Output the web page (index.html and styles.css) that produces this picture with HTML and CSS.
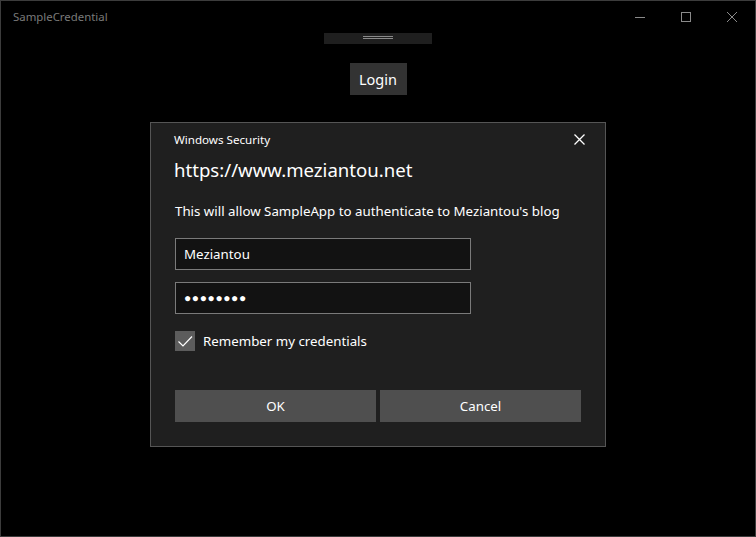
FILE: index.html
```html
<!DOCTYPE html>
<html>
<head>
  <title>SampleCredential</title>
  <link rel="stylesheet" href="styles.css">
</head>
<body>
  <div class="window">
    <div class="titlebar">
      <span class="app-title">SampleCredential</span>
      <div class="caption">
        <span class="cap-btn">
          <svg width="10" height="10" viewBox="0 0 10 10"><path d="M0 5.5h10" stroke="#8a8a8a" stroke-width="1"/></svg>
        </span>
        <span class="cap-btn">
          <svg width="10" height="10" viewBox="0 0 10 10"><rect x="0.5" y="0.5" width="9" height="9" fill="none" stroke="#8a8a8a" stroke-width="1"/></svg>
        </span>
        <span class="cap-btn">
          <svg width="10" height="10" viewBox="0 0 10 10"><path d="M0 0L10 10M10 0L0 10" stroke="#8a8a8a" stroke-width="1"/></svg>
        </span>
      </div>
    </div>

    <div class="content">
      <div class="drag-bar"><span class="grip"></span></div>
      <button class="login-btn">Login</button>
    </div>

    <!-- credential dialog over the app -->
    <div class="dialog">
      <div class="dialog-head">
        <span class="dialog-caption">Windows Security</span>
        <svg class="dialog-close" width="11" height="11" viewBox="0 0 11 11"><path d="M0.5 0.5L10.5 10.5M10.5 0.5L0.5 10.5" stroke="#fff" stroke-width="1.3"/></svg>
      </div>
      <h1 class="dialog-title">https://www.meziantou.net</h1>
      <p class="dialog-text">This will allow SampleApp to authenticate to Meziantou's blog</p>
      <div class="field">Meziantou</div>
      <div class="field password">&#9679;&#9679;&#9679;&#9679;&#9679;&#9679;&#9679;&#9679;</div>
      <label class="remember">
        <span class="check">
          <svg width="20" height="20" viewBox="0 0 20 20"><path d="M3.5 10.5l4.5 4.5 9-9.5" fill="none" stroke="#fff" stroke-width="1.2"/></svg>
        </span>
        Remember my credentials
      </label>
      <div class="actions">
        <button class="dlg-btn">OK</button>
        <button class="dlg-btn">Cancel</button>
      </div>
    </div>
  </div>
</body>
</html>
```

FILE: styles.css
```css
* {
  box-sizing: border-box;
}
body {
  margin: 0;
  background-color: #000;
  font-family: "Noto Sans", "Open Sans", sans-serif;
  color: #fff;
}
.window {
  position: relative;
  width: 756px;
  height: 537px;
  border: 1px solid #3c3c3c;
  background-color: #000;
}
.titlebar {
  display: flex;
  justify-content: space-between;
  align-items: center;
  height: 31px;
}
.app-title {
  padding-left: 12px;
  font-size: 11.4px;
  color: #7a7a7a;
}
.caption {
  display: flex;
  height: 100%;
}
.cap-btn {
  width: 46px;
  display: flex;
  align-items: center;
  justify-content: center;
  padding-top: 1px;
}
.content {
  display: flex;
  flex-direction: column;
  align-items: center;
}
.drag-bar {
  width: 108px;
  height: 11px;
  margin-top: 1px;
  background-color: #1f1f1f;
  display: flex;
  justify-content: center;
  padding-top: 3px;
}
.grip {
  width: 30px;
  height: 3px;
  border-top: 1px solid #8a8a8a;
  border-bottom: 1px solid #8a8a8a;
}
.login-btn {
  margin-top: 19px;
  width: 57px;
  height: 32px;
  border: 0;
  padding: 0;
  background-color: #333;
  color: #fff;
  font-family: inherit;
  font-size: 14.5px;
}
.dialog {
  position: absolute;
  left: 149px;
  top: 121px;
  width: 456px;
  height: 325px;
  border: 1px solid #555;
  background-color: #1f1f1f;
  padding: 0 24px 0 23px;
}
.dialog-head {
  display: flex;
  justify-content: space-between;
  align-items: center;
  height: 32px;
}
.dialog-caption {
  font-size: 11.6px;
}
.dialog-close {
  margin-right: -4px;
}
.dialog-title {
  margin: 1px 0 0 0;
  font-size: 18.6px;
  font-weight: normal;
  line-height: 28px;
}
.dialog-text {
  margin: 17px 0 0 1px;
  font-size: 13.3px;
  line-height: 20px;
}
.field {
  margin: 17px 0 0 1px;
  width: 296px;
  height: 32px;
  border: 1px solid #7a7a7a;
  background-color: #121212;
  padding: 0 8px;
  font-size: 13.3px;
  line-height: 30px;
}
.field + .field {
  margin-top: 12px;
}
.password {
  font-size: 12px;
  letter-spacing: 0.6px;
}
.remember {
  display: flex;
  align-items: center;
  gap: 8px;
  margin: 17px 0 0 1px;
  font-size: 13.3px;
}
.check {
  width: 20px;
  height: 20px;
  background-color: #5c5c5c;
}
.check svg {
  display: block;
}
.actions {
  display: flex;
  gap: 4px;
  margin: 39px 0 0 1px;
}
.dlg-btn {
  width: 201px;
  height: 32px;
  border: 0;
  background-color: #4f4f4f;
  color: #fff;
  font-family: inherit;
  font-size: 13.3px;
}
```
